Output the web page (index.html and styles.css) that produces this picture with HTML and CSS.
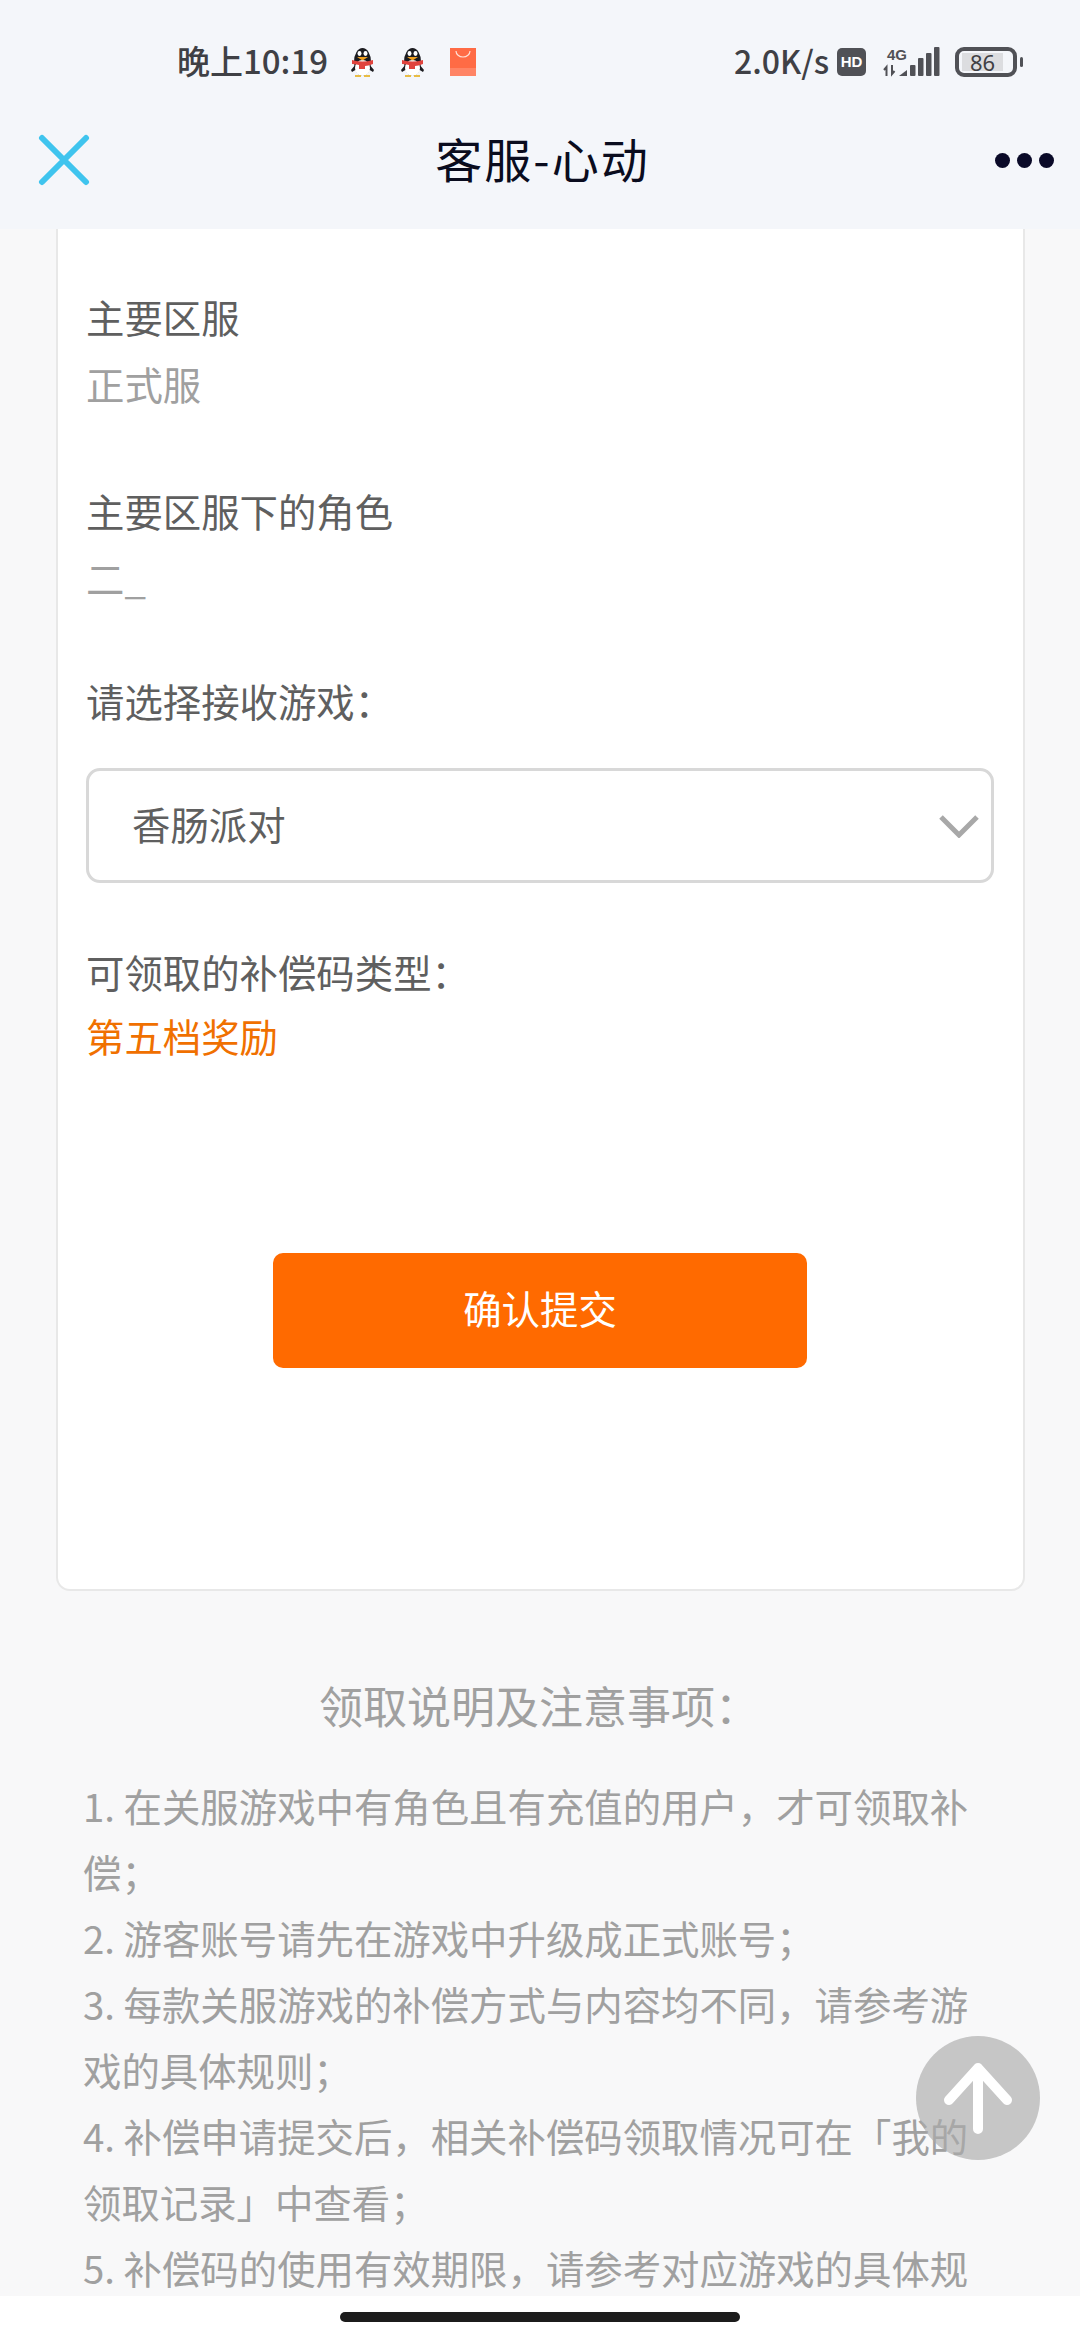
FILE: index.html
```html
<!DOCTYPE html>
<html lang="zh-CN">
<head>
  <meta charset="UTF-8" />
  <meta name="viewport" content="width=device-width, initial-scale=1.0"/>
  <title>客服-心动</title>
  <link rel="stylesheet" href="styles.css">
</head>
<body>

  <header class="top">
    <div class="status">
      <div class="status-left">
        <span class="clock">晚上10:19</span>
        <svg class="penguin" viewBox="0 0 25 30"><path d="M6 17L1 23l1 2 5-3zM19 17l5 6-1 2-5-3z" fill="#1c1c20"/><ellipse cx="12.5" cy="15" rx="8.5" ry="14" fill="#1c1c20"/><ellipse cx="12.5" cy="21" rx="7.5" ry="8" fill="#fff"/><ellipse cx="9.5" cy="6.5" rx="2" ry="2.4" fill="#fff"/><ellipse cx="15.5" cy="6.5" rx="2" ry="2.4" fill="#fff"/><path d="M7 10h11l-5.500 3.500z" fill="#f0a020"/><path d="M2 13q10.500 3 21 0v4q-5 2-8 2v3H9v-4q-4-1-7-1z" fill="#e0433d"/><path d="M5 28h6v2H5zM14 28h6v2h-6z" fill="#e8bd45"/></svg>
        <svg class="penguin" viewBox="0 0 25 30"><path d="M6 17L1 23l1 2 5-3zM19 17l5 6-1 2-5-3z" fill="#1c1c20"/><ellipse cx="12.5" cy="15" rx="8.5" ry="14" fill="#1c1c20"/><ellipse cx="12.5" cy="21" rx="7.5" ry="8" fill="#fff"/><ellipse cx="9.5" cy="6.5" rx="2" ry="2.4" fill="#fff"/><ellipse cx="15.5" cy="6.5" rx="2" ry="2.4" fill="#fff"/><path d="M7 10h11l-5.500 3.500z" fill="#f0a020"/><path d="M2 13q10.500 3 21 0v4q-5 2-8 2v3H9v-4q-4-1-7-1z" fill="#e0433d"/><path d="M5 28h6v2H5zM14 28h6v2h-6z" fill="#e8bd45"/></svg>
        <svg class="bag" viewBox="0 0 26 28"><rect width="26" height="28" fill="#ff6b45"/><rect y="20" width="26" height="8" fill="#ff8465"/><path d="M6 3a7 6 0 0 0 14 0" fill="none" stroke="#ffe0d5" stroke-width="1.2"/></svg>
      </div>
      <div class="status-right">
        <span class="speed">2.0K/s</span>
        <span class="hd">HD</span>
        <svg class="signal" viewBox="0 0 57 30"><text x="4" y="13" class="net">4G</text><path d="M3.500 29v-9l-2.500 3M9 18v9l2.500-3" fill="none" stroke="#505156" stroke-width="2"/><path d="M16 29l8-6v6z" fill="#505156"/><rect x="27" y="18" width="5.500" height="11" rx="1" fill="#505156"/><rect x="35" y="11" width="5.500" height="18" rx="1" fill="#505156"/><rect x="43" y="6" width="5.500" height="23" rx="1" fill="#505156"/><rect x="51" y="0" width="5.500" height="29" rx="1" fill="#505156"/></svg>
        <div class="battery"><span class="battery-level">86</span></div>
        <span class="battery-tip"></span>
      </div>
    </div>
    <div class="nav">
      <svg class="close" viewBox="0 0 52 52"><path d="M4 4l44 44M48 4L4 48" stroke="#3fc4ee" stroke-width="6" stroke-linecap="round" fill="none"/></svg>
      <h1>客服-心动</h1>
      <div class="more"><i></i><i></i><i></i></div>
    </div>
  </header>

  <main class="card">
    <div class="field">
      <p class="label">主要区服</p>
      <p class="value">正式服</p>
    </div>
    <div class="field field-last">
      <p class="label">主要区服下的角色</p>
      <p class="value">二_</p>
    </div>
    <p class="label">请选择接收游戏：</p>
    <div class="select">
      <span>香肠派对</span>
      <svg class="chevron" viewBox="0 0 40 24"><path d="M2 3l18 18L38 3" fill="none" stroke="#a8a8a8" stroke-width="5"/></svg>
    </div>
    <p class="label">可领取的补偿码类型：</p>
    <p class="reward">第五档奖励</p>
    <button class="submit" type="button">确认提交</button>
  </main>

  <section class="notes">
    <h2>领取说明及注意事项：</h2>
    <p>1. 在关服游戏中有角色且有充值的用户，才可领取补偿；</p>
    <p>2. 游客账号请先在游戏中升级成正式账号；</p>
    <p>3. 每款关服游戏的补偿方式与内容均不同，请参考游戏的具体规则；</p>
    <p>4. 补偿申请提交后，相关补偿码领取情况可在「我的领取记录」中查看；</p>
    <p>5. 补偿码的使用有效期限，请参考对应游戏的具体规</p>
  </section>

  <div class="to-top">
    <svg viewBox="0 0 72 72"><path d="M36 67V6M7 38L36 6l29 32" fill="none" stroke="#fff" stroke-width="10" stroke-linecap="round" stroke-linejoin="round"/></svg>
  </div>

  <div class="home-bar"><span></span></div>

</body>
</html>
```

FILE: styles.css
```css
* {
  box-sizing: border-box;
}
html, body {
  height: 2340px;
}
body {
  margin: 0;
  overflow: hidden;
  position: relative;
  background-color: #f8f8f9;
  font-family: "Noto Sans CJK SC", "Noto Sans", sans-serif;
}
p, h1, h2 {
  margin: 0;
  font-weight: normal;
}
.top {
  height: 229px;
  padding-top: 37px;
  background-color: #f4f6fa;
}
.status {
  height: 50px;
  display: flex;
  justify-content: space-between;
  align-items: center;
  padding: 0 57px 0 177px;
}
.status-left, .status-right {
  display: flex;
  align-items: center;
}
.clock {
  font-size: 33px;
  font-weight: 500;
  color: #3f4045;
  margin-top: -4px;
  margin-right: 22px;
}
.penguin {
  width: 25px;
  height: 30px;
  margin-right: 25px;
}
.bag {
  width: 26px;
  height: 28px;
}
.speed {
  font-size: 32px;
  font-weight: 500;
  color: #3f4045;
  margin-top: -4px;
  margin-right: 8px;
}
.hd {
  width: 29px;
  height: 28px;
  border-radius: 5px;
  background-color: #505156;
  color: #fff;
  font: bold 15px/28px "Liberation Sans", sans-serif;
  text-align: center;
  margin-right: 17px;
}
.signal {
  width: 57px;
  height: 30px;
  margin-right: 15px;
}
.net {
  font: bold 15px "Liberation Sans", sans-serif;
  fill: #505156;
}
.battery {
  width: 62px;
  height: 30px;
  border: 4px solid #505156;
  border-radius: 9px;
  padding: 2px 10px 2px 3px;
}
.battery-level {
  display: block;
  height: 18px;
  background-color: #dcdde0;
  color: #3f4045;
  font: 22px/18px "Noto Sans", sans-serif;
  text-align: center;
}
.battery-tip {
  width: 3px;
  height: 10px;
  margin-left: 3px;
  border-radius: 2px;
  background-color: #505156;
}
.nav {
  height: 60px;
  margin-top: 43px;
  padding: 0 26px 0 38px;
  display: flex;
  justify-content: space-between;
  align-items: center;
}
.close {
  width: 52px;
  height: 52px;
}
.nav h1 {
  font-size: 47px;
  letter-spacing: 2px;
  padding-bottom: 6px;
  color: #0a0c1e;
}
.more {
  display: flex;
  gap: 7px;
}
.more i {
  width: 15px;
  height: 15px;
  border-radius: 50%;
  background-color: #0a0a28;
}
.card {
  height: 1362px;
  margin: 0 55px 0 56px;
  padding: 59px 29px 0 28px;
  background-color: #fff;
  border: 2px solid #e8e8e8;
  border-top: none;
  border-radius: 0 0 14px 14px;
}
.label {
  font-size: 38.4px;
  line-height: 56px;
  color: #5f5f5f;
}
.value {
  font-size: 38.4px;
  line-height: 56px;
  margin-top: 11px;
  color: #a0a0a0;
}
.field {
  margin-bottom: 71px;
}
.field-last {
  margin-bottom: 67px;
}
.select {
  height: 115px;
  margin-top: 40px;
  margin-bottom: 60px;
  padding: 0 12px 6px 43px;
  display: flex;
  justify-content: space-between;
  align-items: center;
  border: 3px solid #d8d8d8;
  border-radius: 14px;
  font-size: 38.4px;
  color: #5f5f5f;
}
.chevron {
  width: 40px;
  height: 24px;
  margin-top: 6px;
}
.reward {
  font-size: 38.4px;
  line-height: 56px;
  margin-top: 8px;
  color: #f07000;
}
.submit {
  display: block;
  width: 534px;
  height: 115px;
  margin: 190px auto 0 auto;
  padding: 0 0 8px 0;
  border: none;
  border-radius: 10px;
  background-color: #ff6a00;
  color: #fff;
  font-family: inherit;
  font-size: 38.4px;
}
.notes {
  padding: 84px 91px 0 83px;
  color: #a0a0a0;
  font-size: 38.4px;
  line-height: 66px;
}
.notes h2 {
  font-size: 44px;
  text-align: center;
  line-height: 60px;
  margin-bottom: 37px;
  margin-right: -6px;
}
.to-top {
  position: absolute;
  left: 916px;
  top: 2036px;
  width: 124px;
  height: 124px;
  border-radius: 50%;
  background-color: rgba(170,170,170,0.65);
  display: flex;
  justify-content: center;
  align-items: center;
}
.to-top svg {
  width: 72px;
  height: 72px;
}
.home-bar {
  position: absolute;
  left: 0;
  right: 0;
  top: 2296px;
  height: 44px;
  background-color: #fff;
  display: flex;
  justify-content: center;
  padding-top: 16px;
}
.home-bar span {
  width: 400px;
  height: 10px;
  border-radius: 5px;
  background-color: #1c1c1c;
}
```
